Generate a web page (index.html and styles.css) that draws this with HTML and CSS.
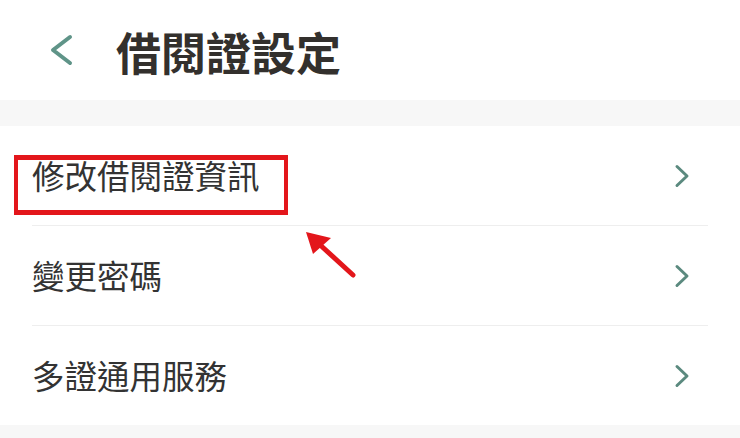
FILE: index.html
```html
<!DOCTYPE html>
<html lang="zh-Hant">
<head>
    <meta charset="UTF-8">
    <meta name="viewport" content="width=device-width, initial-scale=1.0">
    <title>借閱證設定</title>
    <link rel="stylesheet" href="styles.css">
</head>
<body>
    <div class="page">
        <div class="header">
            <svg class="back" width="24" height="32" viewBox="0 0 24 32">
                <polyline points="20,3 3,16 20,29" fill="none" stroke="#5f9488" stroke-width="4" stroke-linecap="round" stroke-linejoin="round"/>
            </svg>
            <h1 class="title">借閱證設定</h1>
        </div>

        <div class="band"></div>

        <div class="list">
            <div class="row">
                <span class="label">修改借閱證資訊</span>
                <svg class="arrow-right" width="16" height="24" viewBox="0 0 16 24">
                    <polyline points="3,2.5 13,12 3,21.5" fill="none" stroke="#5b8a7f" stroke-width="3" stroke-linecap="round" stroke-linejoin="round"/>
                </svg>
            </div>
            <div class="row">
                <span class="label">變更密碼</span>
                <svg class="arrow-right" width="16" height="24" viewBox="0 0 16 24">
                    <polyline points="3,2.5 13,12 3,21.5" fill="none" stroke="#5b8a7f" stroke-width="3" stroke-linecap="round" stroke-linejoin="round"/>
                </svg>
            </div>
            <div class="row">
                <span class="label">多證通用服務</span>
                <svg class="arrow-right" width="16" height="24" viewBox="0 0 16 24">
                    <polyline points="3,2.5 13,12 3,21.5" fill="none" stroke="#5b8a7f" stroke-width="3" stroke-linecap="round" stroke-linejoin="round"/>
                </svg>
            </div>
        </div>

        <div class="band bottom"></div>

        <!-- annotation marks -->
        <div class="highlight"></div>
        <svg class="pointer" width="740" height="438" viewBox="0 0 740 438">
            <line x1="353" y1="275" x2="318" y2="243" stroke="#e3161b" stroke-width="5" stroke-linecap="round"/>
            <polygon points="306,232 331,238 313,254" fill="#e3161b"/>
        </svg>
    </div>
</body>
</html>
```

FILE: styles.css
```css
body {
    margin: 0;
    background: #ffffff;
    font-family: "Noto Sans CJK TC", "Noto Sans", sans-serif;
}

.page {
    position: relative;
    width: 740px;
    height: 438px;
    overflow: hidden;
}

.header {
    display: flex;
    align-items: center;
    height: 100px;
    padding-left: 50px;
}

.back {
    display: block;
}

.title {
    margin: 0 0 -2px 42px;
    font-size: 45px;
    font-weight: 700;
    line-height: 1;
    color: #33302d;
}

.band {
    height: 26px;
    background: #f7f7f7;
}

.band.bottom {
    height: 20px;
}

.list {
    background: #ffffff;
}

.row {
    display: flex;
    align-items: center;
    justify-content: space-between;
    height: 99px;
    margin: 0 32px;
    padding-right: 18px;
    border-bottom: 1px solid #eeeeee;
}

.row:last-child {
    border-bottom: none;
}

.label {
    font-size: 32.5px;
    line-height: 1;
    color: #333333;
}

.arrow-right {
    display: block;
}

.highlight {
    position: absolute;
    left: 14px;
    top: 155px;
    width: 266px;
    height: 50px;
    border: 4px solid #e3161b;
    border-top-width: 5px;
    border-bottom-width: 5px;
}

.pointer {
    position: absolute;
    left: 0;
    top: 0;
    pointer-events: none;
}
```
